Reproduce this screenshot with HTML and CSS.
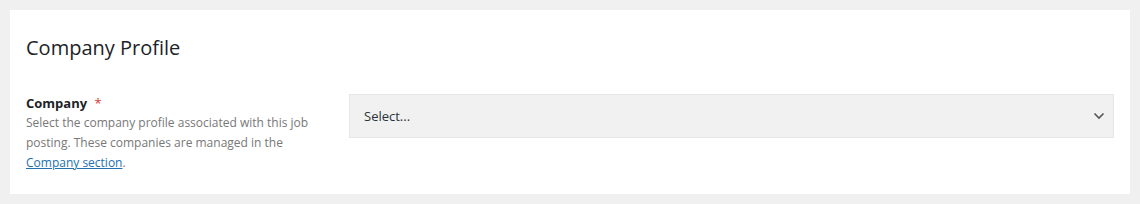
FILE: index.html
```html
<!DOCTYPE html>
<html lang="en">
<head>
    <meta charset="UTF-8">
    <meta name="viewport" content="width=device-width, initial-scale=1.0">
    <title>Company Profile</title>
    <link rel="stylesheet" href="styles.css">
</head>
<body>
    <div class="card">
        <h2 class="card-title">Company Profile</h2>
        <div class="field-row">
            <div class="field-info">
                <label class="field-label" for="company">Company <span class="required">*</span></label>
                <p class="field-help">Select the company profile associated with this job posting. These companies are managed in the <a href="#">Company section</a>.</p>
            </div>
            <div class="field-control">
                <div class="select" id="company">
                    <span class="select-value">Select...</span>
                    <svg class="select-arrow" width="12" height="8" viewBox="0 0 12 8">
                        <path d="M1.5 1.5 L6 6 L10.5 1.5" fill="none" stroke="#555" stroke-width="1.6"/>
                    </svg>
                </div>
            </div>
        </div>
    </div>
</body>
</html>
```

FILE: styles.css
```css
body {
    margin: 0;
    padding: 10px;
    background: #f0f0f1;
    font-family: 'Open Sans', 'Noto Sans', Arial, sans-serif;
    color: #1d2327;
}

.card {
    background: #fff;
    padding: 24px 16px 21px 16px;
}

.card-title {
    margin: 0 0 31px 0;
    font-size: 20px;
    font-weight: 400;
    line-height: 28px;
    color: #1d2327;
}

.field-row {
    display: flex;
    gap: 23px;
}

.field-info {
    width: 300px;
    flex-shrink: 0;
}

.field-label {
    display: block;
    font-size: 13px;
    font-weight: 700;
    line-height: 20px;
}

.required {
    color: #d63638;
    font-weight: 400;
    margin-left: 4px;
}

.field-help {
    margin: 0;
    font-size: 12px;
    line-height: 20px;
    color: #787878;
}

.field-help a {
    color: #2271b1;
}

.field-control {
    flex: 1;
    padding-top: 1px;
}

.select {
    display: flex;
    align-items: center;
    justify-content: space-between;
    height: 42px;
    padding: 0 8px 0 14px;
    background: #f1f1f1;
    border: 1px solid #e6e6e6;
    font-size: 13px;
    color: #2c3338;
}
```
